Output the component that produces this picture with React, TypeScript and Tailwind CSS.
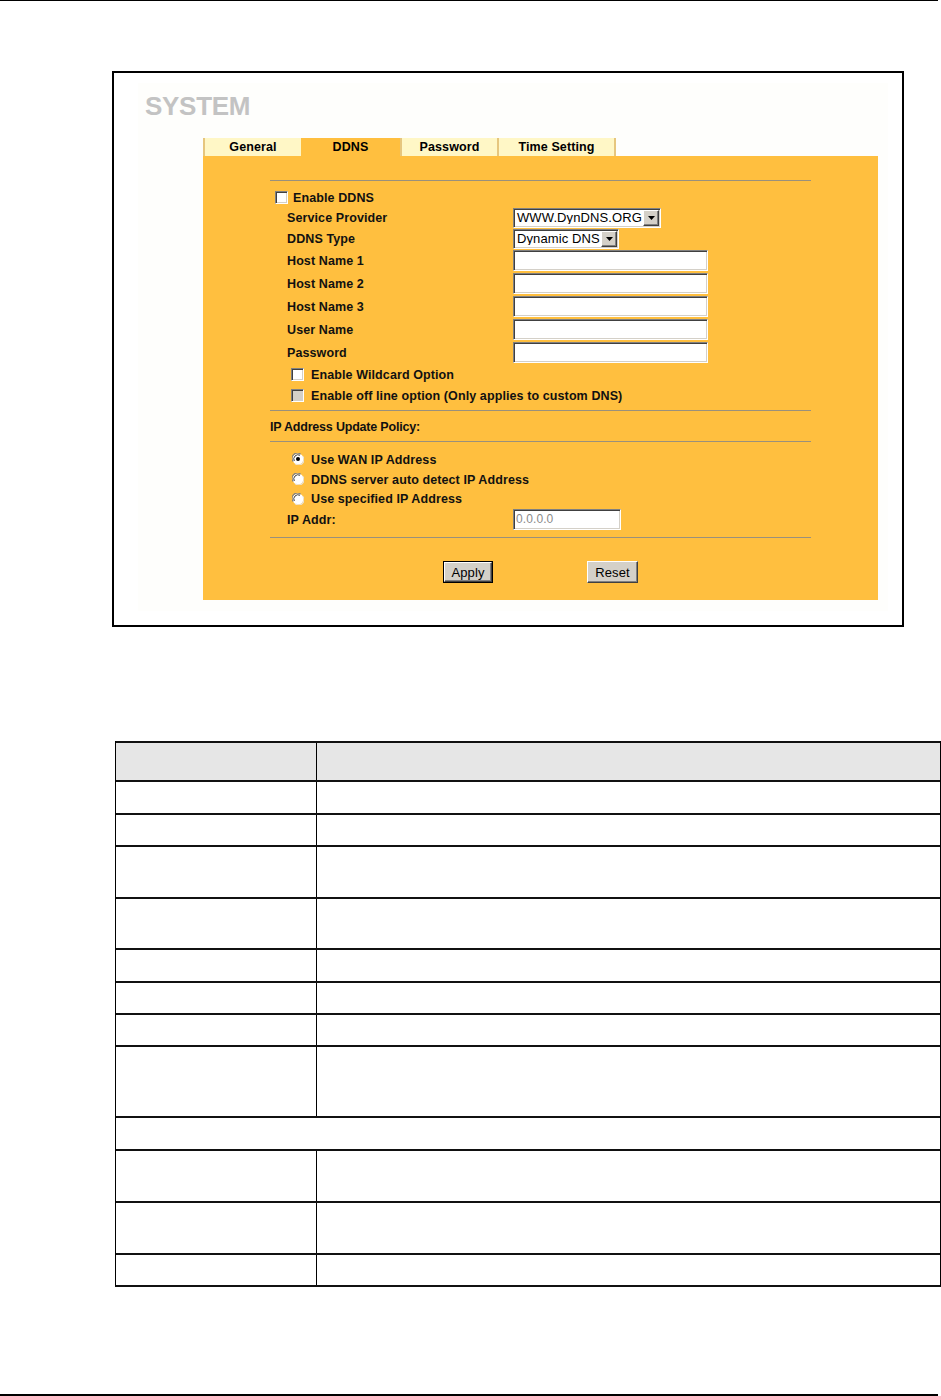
import React from "react";

const sunken =
  "border border-t-[#808080] border-l-[#808080] border-b-white border-r-white shadow-[inset_1px_1px_0_#404040,inset_-1px_-1px_0_#d4d0c8]";
const raised =
  "border border-t-white border-l-white border-b-[#404040] border-r-[#404040] shadow-[inset_-1px_-1px_0_#808080]";

function CheckBox({ disabled }: { disabled?: boolean }) {
  return (
    <span
      className={`block w-[13px] h-[13px] shrink-0 ${sunken} ${disabled ? "bg-[#d4d0c8]" : "bg-white"}`}
    />
  );
}

function Radio({ checked }: { checked?: boolean }) {
  return (
    <svg width="12" height="12" viewBox="0 0 12 12" className="shrink-0">
      <circle cx="6" cy="6" r="5.5" fill="#ffffff" />
      <path d="M1.2 8.5 A5.2 5.2 0 0 1 8.5 1.2" stroke="#808080" strokeWidth="1.2" fill="none" />
      <path d="M2.3 8 A4.2 4.2 0 0 1 8 2.3" stroke="#404040" strokeWidth="1" fill="none" />
      <path d="M3.5 10.8 A5.2 5.2 0 0 0 10.8 3.5" stroke="#e8e4dc" strokeWidth="1.2" fill="none" />
      {checked && <circle cx="6" cy="6" r="2" fill="#000000" />}
    </svg>
  );
}

function SelectBox({ value, width }: { value: string; width: string }) {
  return (
    <div className={`flex items-center h-[20px] bg-white ${sunken} ${width}`}>
      <span className="flex-1 pl-[3px] text-[13px] leading-none text-black whitespace-nowrap overflow-hidden">
        {value}
      </span>
      <span
        className={`flex items-center justify-center w-[16px] h-[16px] mr-px bg-[#d4d0c8] ${raised}`}
      >
        <svg width="7" height="4" viewBox="0 0 7 4">
          <path d="M0 0 H7 L3.5 4 Z" fill="#000" />
        </svg>
      </span>
    </div>
  );
}

function TextBox({ width, value }: { width: string; value?: string }) {
  return (
    <div className={`flex items-center bg-white ${sunken} ${width}`}>
      {value && (
        <span className="pl-[2px] text-[12px] leading-none text-[#8a8a8a]">{value}</span>
      )}
    </div>
  );
}

function Rule() {
  return <div className="ml-[67px] w-[541px] h-px bg-[#9a907c]" />;
}

function LabelRow({
  label,
  h,
  children,
}: {
  label: string;
  h: string;
  children: React.ReactNode;
}) {
  return (
    <div className={`flex items-center pl-[84px] ${h}`}>
      <span className="w-[226px] pt-[2px] font-bold">{label}</span>
      {children}
    </div>
  );
}

const rows: { h: string; span?: boolean; header?: boolean }[] = [
  { h: "h-[39px]", header: true },
  { h: "h-[33px]" },
  { h: "h-[32px]" },
  { h: "h-[52px]" },
  { h: "h-[51px]" },
  { h: "h-[33px]" },
  { h: "h-[32px]" },
  { h: "h-[32px]" },
  { h: "h-[71px]" },
  { h: "h-[33px]", span: true },
  { h: "h-[52px]" },
  { h: "h-[52px]" },
  { h: "h-[32px]" },
];

export default function App() {
  return (
    <div className="w-[941px] h-[1396px] bg-white flex flex-col font-['Liberation_Sans',Arial,sans-serif] text-black overflow-hidden">
      <div className="w-[938px] h-px bg-black" />

      {/* Screenshot frame */}
      <div className="mt-[70px] ml-[112px] w-[792px] h-[556px] border-2 border-black flex">
        <div className="mt-[10px] ml-[24px] mr-[14px] mb-[14px] flex-1 bg-[#fefefc] flex flex-col">
          <div className="pl-[7px] pt-[8px] h-[38px] text-[26px] leading-[30px] font-bold text-[#c3c3c3] tracking-[-0.3px]">
            SYSTEM
          </div>
          <div className="mt-[17px] ml-[65px] flex flex-col">
            {/* tabs */}
            <div className="flex h-[18px] text-[12.5px] font-bold leading-none tracking-[0.1px]">
              <div className="w-[98px] flex items-center justify-center pt-[1px] bg-[#fff7c6] border-l-2 border-[#e6c67e]">
                General
              </div>
              <div className="w-[99px] flex items-center justify-center pt-[1px] bg-[#ffbf3f]">DDNS</div>
              <div className="w-[97px] flex items-center justify-center pt-[1px] bg-[#fff7c6] border-l-2 border-[#e6c67e]">
                Password
              </div>
              <div className="w-[119px] flex items-center justify-center pt-[1px] bg-[#fff7c6] border-l-2 border-r-2 border-[#e6c67e]">
                Time Setting
              </div>
            </div>
            {/* panel */}
            <div className="w-[675px] h-[444px] bg-[#ffbf3f] flex flex-col text-[12.5px] leading-none text-[#111] tracking-[0.1px]">
              <div className="h-[24px]" />
              <Rule />
              <div className="h-[6px]" />
              <div className="flex items-center h-[20px] pl-[72px] gap-[5px]">
                <CheckBox />
                <span className="pt-[2px] font-bold">Enable DDNS</span>
              </div>
              <LabelRow label="Service Provider" h="h-[21px]">
                <SelectBox value="WWW.DynDNS.ORG" width="w-[148px]" />
              </LabelRow>
              <LabelRow label="DDNS Type" h="h-[21px]">
                <SelectBox value="Dynamic DNS" width="w-[106px]" />
              </LabelRow>
              {["Host Name 1", "Host Name 2", "Host Name 3", "User Name", "Password"].map((l) => (
                <LabelRow key={l} label={l} h="h-[23px]">
                  <TextBox width="w-[195px] h-[21px]" />
                </LabelRow>
              ))}
              <div className="flex items-center h-[21px] pl-[88px] gap-[7px]">
                <CheckBox />
                <span className="pt-[2px] font-bold">Enable Wildcard Option</span>
              </div>
              <div className="flex items-center h-[20px] pl-[88px] gap-[7px]">
                <CheckBox disabled />
                <span className="pt-[2px] font-bold">Enable off line option (Only applies to custom DNS)</span>
              </div>
              <div className="h-[5px]" />
              <Rule />
              <div className="flex items-center h-[30px] pl-[67px] pt-[2px] font-bold tracking-[-0.2px]">
                IP Address Update Policy:
              </div>
              <Rule />
              <div className="h-[7px]" />
              <div className="flex items-center h-[20px] pl-[89px] gap-[7px]">
                <Radio checked />
                <span className="pt-[2px] font-bold">Use WAN IP Address</span>
              </div>
              <div className="flex items-center h-[20px] pl-[89px] gap-[7px]">
                <Radio />
                <span className="pt-[2px] font-bold">DDNS server auto detect IP Address</span>
              </div>
              <div className="flex items-center h-[19px] pl-[89px] gap-[7px]">
                <Radio />
                <span className="pt-[2px] font-bold">Use specified IP Address</span>
              </div>
              <LabelRow label="IP Addr:" h="h-[22px]">
                <TextBox width="w-[108px] h-[21px]" value="0.0.0.0" />
              </LabelRow>
              <div className="h-[7px]" />
              <Rule />
              <div className="h-[23px]" />
              <div className="flex h-[22px] pl-[240px]">
                <div className="w-[50px] h-[22px] border border-black flex">
                  <div
                    className={`flex-1 flex items-center justify-center bg-[#d4d0c8] text-[13px] font-normal text-black ${raised}`}
                  >
                    Apply
                  </div>
                </div>
                <div
                  className={`ml-[94px] w-[51px] h-[22px] flex items-center justify-center bg-[#d4d0c8] text-[13px] font-normal text-black ${raised}`}
                >
                  Reset
                </div>
              </div>
            </div>
          </div>
        </div>
      </div>

      {/* Description table */}
      <div className="mt-[114px] ml-[115px] w-[826px] border-l border-r border-black border-b-2 border-b-[#111] flex flex-col">
        {rows.map((r, i) => (
          <div
            key={i}
            className={`flex border-t-2 border-[#111] ${r.h} ${r.header ? "bg-[#e6e6e6]" : "bg-white"}`}
          >
            {r.span ? (
              <div className="flex-1" />
            ) : (
              <>
                <div className="w-[201px] border-r border-black" />
                <div className="flex-1" />
              </>
            )}
          </div>
        ))}
      </div>

      <div className="mt-auto w-[938px] h-[2px] bg-black" />
    </div>
  );
}
